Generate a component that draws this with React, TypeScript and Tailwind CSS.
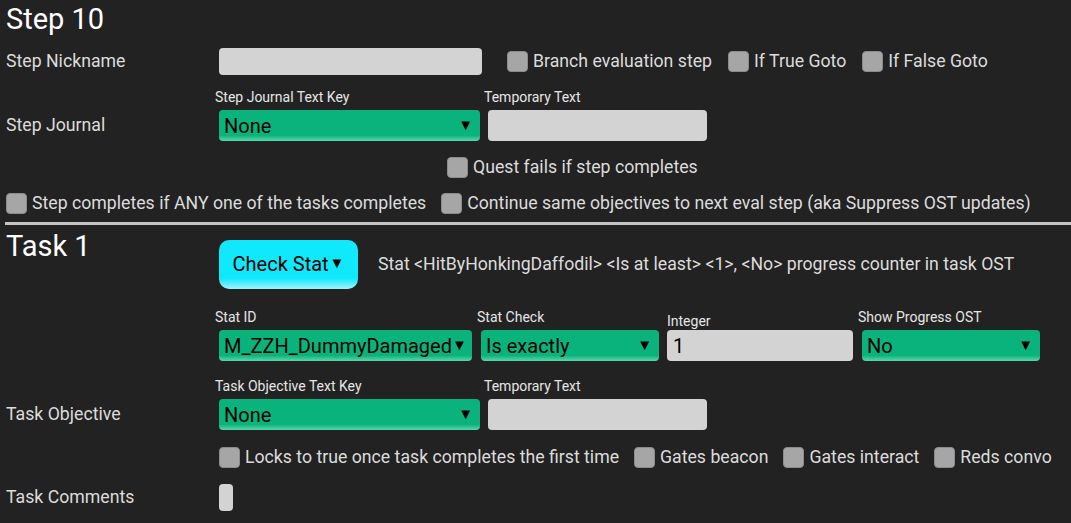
import React from 'react';

const font = { fontFamily: 'Roboto, "Noto Sans", sans-serif' };

function Check({ label }: { label: string }) {
  return (
    <div className="flex items-center gap-[5px] h-[21px]">
      <div className="w-[21px] h-[21px] rounded-[4px] bg-[#a6a6a6] border border-[#8c8c8c] shrink-0" />
      <span className="text-[17.7px] text-[#dcdcdc] leading-none whitespace-nowrap">{label}</span>
    </div>
  );
}

function Select({ value, w }: { value: string; w: string }) {
  return (
    <div
      className={`${w} h-[31px] rounded-[4px] flex items-center justify-between pl-[5px] pr-[7px] text-black bg-[linear-gradient(to_bottom,#0ab37c_0%,#0ab37c_82%,#5ad8ad_100%)]`}
    >
      <span className="text-[20px] leading-none whitespace-nowrap">{value}</span>
      <span className="text-[15px] leading-none">▼</span>
    </div>
  );
}

function Input({ w, h = 'h-[31px]', value }: { w: string; h?: string; value?: string }) {
  return (
    <div className={`${w} ${h} rounded-[4px] bg-[#d3d3d3] flex items-center pl-[6px] text-black text-[20px] leading-none`}>
      {value}
    </div>
  );
}

function Field({ label, children, lift = false }: { label: string; children: React.ReactNode; lift?: boolean }) {
  return (
    <div className="flex flex-col">
      <span
        className={`text-[14px] text-[#e6e6e6] leading-none h-[16px] whitespace-nowrap ${lift ? 'mt-[4px] mb-[0px] ml-0' : 'mb-[4px] -ml-[4px]'}`}
      >
        {label}
      </span>
      {children}
    </div>
  );
}

export default function App() {
  return (
    <div className="w-[1071px] h-[523px] bg-[#222222] overflow-hidden pl-[6px]" style={font}>
      <div className="text-[29px] text-white leading-none pt-[5px] h-[36px]">Step 10</div>

      {/* Step nickname */}
      <div className="flex items-center h-[27px] mt-[12px]">
        <div className="w-[213px] text-[17.7px] text-[#dcdcdc] leading-none">Step Nickname</div>
        <Input w="w-[263px]" h="h-[27px]" />
        <div className="ml-[25px] flex items-center gap-[16px]">
          <Check label="Branch evaluation step" />
          <Check label="If True Goto" />
          <Check label="If False Goto" />
        </div>
      </div>

      {/* Step journal */}
      <div className="flex items-end mt-[15px]">
        <div className="w-[213px] text-[17.7px] text-[#dcdcdc] leading-none h-[31px] flex items-center">Step Journal</div>
        <Field label="Step Journal Text Key">
          <Select value="None" w="w-[261px]" />
        </Field>
        <div className="ml-[8px]">
          <Field label="Temporary Text">
            <Input w="w-[219px]" />
          </Field>
        </div>
      </div>

      <div className="flex mt-[16px] pl-[441px]">
        <Check label="Quest fails if step completes" />
      </div>

      <div className="flex mt-[15px] gap-[15px]">
        <Check label="Step completes if ANY one of the tasks completes" />
        <Check label="Continue same objectives to next eval step (aka Suppress OST updates)" />
      </div>

      <div className="h-[3px] bg-[#c4c4c4] mt-[8px] -ml-[1px]" />

      {/* Task 1 */}
      <div className="flex items-start mt-[15px]">
        <div className="w-[213px] text-[29px] text-white leading-none -mt-[8px]">Task 1</div>
        <div className="w-[139px] h-[49px] rounded-[10px] flex items-center justify-center gap-[1px] pb-[2px] text-black bg-[linear-gradient(to_bottom,#10e8fc_0%,#10e8fc_78%,#9ff5fd_100%)]">
          <span className="text-[20px] leading-none">Check Stat</span>
          <span className="text-[15px] leading-none">▼</span>
        </div>
        <div className="ml-[20px] h-[49px] flex items-center text-[17.7px] text-[#dcdcdc] leading-none whitespace-nowrap">
          Stat &lt;HitByHonkingDaffodil&gt; &lt;Is at least&gt; &lt;1&gt;, &lt;No&gt; progress counter in task OST
        </div>
      </div>

      <div className="flex items-end mt-[21px] pl-[213px]">
        <Field label="Stat ID">
          <Select value="M_ZZH_DummyDamaged" w="w-[253px]" />
        </Field>
        <div className="ml-[9px]">
          <Field label="Stat Check">
            <Select value="Is exactly" w="w-[178px]" />
          </Field>
        </div>
        <div className="ml-[8px]">
          <Field label="Integer" lift>
            <Input w="w-[186px]" value="1" />
          </Field>
        </div>
        <div className="ml-[9px]">
          <Field label="Show Progress OST">
            <Select value="No" w="w-[178px]" />
          </Field>
        </div>
      </div>

      {/* Task objective */}
      <div className="flex items-end mt-[18px]">
        <div className="w-[213px] text-[17.7px] text-[#dcdcdc] leading-none h-[31px] flex items-center">Task Objective</div>
        <Field label="Task Objective Text Key">
          <Select value="None" w="w-[261px]" />
        </Field>
        <div className="ml-[8px]">
          <Field label="Temporary Text">
            <Input w="w-[219px]" />
          </Field>
        </div>
      </div>

      <div className="flex mt-[17px] pl-[213px] gap-[15px]">
        <Check label="Locks to true once task completes the first time" />
        <Check label="Gates beacon" />
        <Check label="Gates interact" />
        <Check label="Reds convo" />
      </div>

      <div className="flex items-center mt-[16px]">
        <div className="w-[213px] text-[17.7px] text-[#dcdcdc] leading-none">Task Comments</div>
        <div className="w-[14px] h-[27px] rounded-[4px] bg-[#d3d3d3]" />
      </div>
    </div>
  );
}
